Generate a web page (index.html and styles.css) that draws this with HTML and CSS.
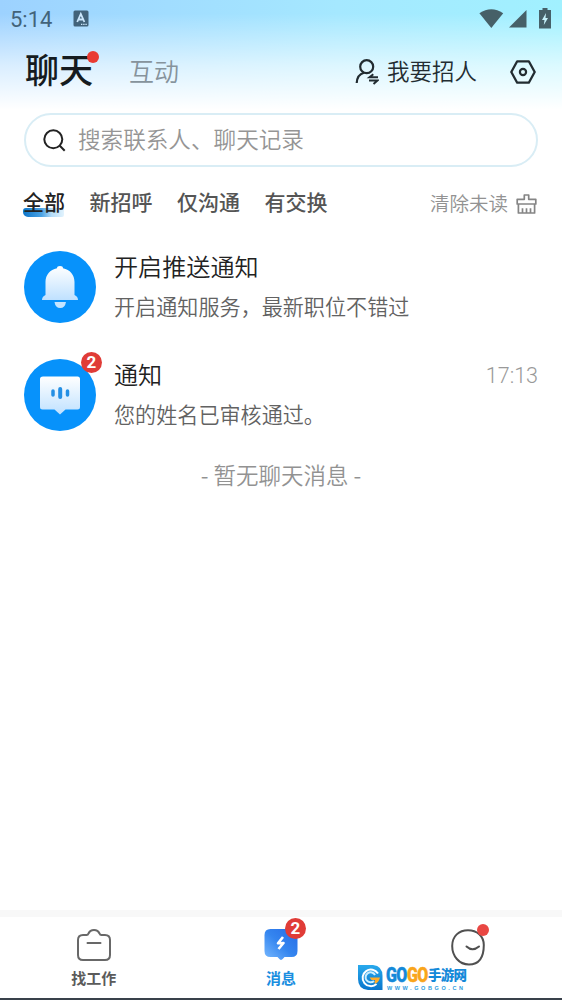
FILE: index.html
```html
<!DOCTYPE html>
<html lang="zh-CN">
<head>
<meta charset="utf-8">
<title>聊天</title>
<link rel="stylesheet" href="styles.css">
</head>
<body>
<div class="app">
  <header class="top">
    <div class="status">
      <span class="clock">5:14</span>
      <svg class="input-icon" width="16" height="17" viewBox="0 0 16 17"><rect x="0.5" y="0.5" width="15" height="16" rx="1.5" fill="#42637a"/><path d="M4.2 12 7.8 4 11.4 12M5.5 9.5H10" fill="none" stroke="#cbe6fb" stroke-width="1.8"/><path d="M8 14.3H14" stroke="#cbe6fb" stroke-width="1.2" stroke-dasharray="1.4 .8"/></svg>
      <div class="system">
        <svg width="25" height="20" viewBox="0 0 25 20"><path d="M.4 4.3Q12.3-3.8 24.2 4.3L12.3 19Z" fill="#466068"/></svg>
        <svg width="18" height="18" viewBox="0 0 18 18"><path d="M17.5 0V17.5H0Z" fill="#466068"/></svg>
        <svg width="12" height="21" viewBox="0 0 12 21"><path d="M3.5 0H8.5V2H12V20.5H0V2H3.5Z" fill="#466068"/><path d="M7 5 3 12H5.500L4.800 17 9 10H6.500Z" fill="#c7f2fb"/></svg>
      </div>
    </div>
    <div class="titlebar">
      <h1 class="title">聊天<i class="title-dot"></i></h1>
      <span class="subtitle">互动</span>
      <div class="hire">
        <svg width="24" height="26" viewBox="0 0 24 26" fill="none" stroke="#222c31" stroke-width="2.200"><circle cx="11.700" cy="7.700" r="6.500"/><path d="M1.700 24C2 18.500 4 15 9 13.700"/><path d="M23 18.200H14.500L18.300 15.200M14 21.500H22.500L18.500 25" stroke-width="2"/></svg>
        <span>我要招人</span>
      </div>
      <svg class="settings" width="26" height="24" viewBox="0 0 26 24" fill="none" stroke="#222c31"><path d="M7.200 1.300H18.800L24.700 12 18.800 22.700H7.200L1.300 12Z" stroke-width="2.300" stroke-linejoin="round"/><circle cx="13" cy="12" r="3.100" stroke-width="2.200"/></svg>
    </div>
  </header>

  <div class="search">
    <svg width="23" height="23" viewBox="0 0 23 23" fill="none" stroke="#222" stroke-width="2"><circle cx="10.300" cy="10.300" r="9"/><path d="m16.800 16.800 4.900 4.900"/></svg>
    <span>搜索联系人、聊天记录</span>
  </div>

  <nav class="filters">
    <span class="filter active">全部</span>
    <span class="filter">新招呼</span>
    <span class="filter">仅沟通</span>
    <span class="filter">有交换</span>
    <div class="clear">
      <span>清除未读</span>
      <svg width="21" height="20" viewBox="0 0 21 20" fill="none" stroke="#858585" stroke-width="1.700" stroke-linejoin="round"><path d="M8.300 5.300V1H12.700V5.300H19.800V10H1.200V5.300ZM2.400 10V19H18.600V10M6.500 19V14.300M10.500 19V14.300M14.500 19V14.300"/></svg>
    </div>
  </nav>

  <main class="messages">
    <article class="message">
      <div class="avatar">
        <svg width="72" height="72" viewBox="0 0 72 72"><defs><linearGradient id="bell" x2="0" y2="1"><stop stop-color="#fff"/><stop offset="1" stop-color="#bfe1ff"/></linearGradient></defs><circle cx="36" cy="36" r="36" fill="#0792fb"/><path d="M33 17.200Q33 15 36 15T39 17.200C46 18.500 50.500 24 50.500 31V44Q54 45.500 54 49H18Q18 45.500 21.500 44V31C21.500 24 26 18.500 33 17.200Z" fill="url(#bell)"/><path d="M30.500 51H42Q41 57 36.200 57T30.500 51Z" fill="#c6e5ff"/></svg>
      </div>
      <div class="content">
        <div class="headline"><h2>开启推送通知</h2></div>
        <p>开启通知服务，最新职位不错过</p>
      </div>
    </article>
    <article class="message">
      <div class="avatar">
        <svg width="72" height="72" viewBox="0 0 72 72"><defs><linearGradient id="bubble" x2="0" y2="1"><stop stop-color="#fff"/><stop offset="1" stop-color="#bfe1ff"/></linearGradient></defs><circle cx="36" cy="36" r="36" fill="#0792fb"/><path d="M19 17.500H53.500Q56 17.500 56 20V48Q56 50.500 53.500 50.500H41.500L36 55.500 30.500 50.500H18.500Q16 50.500 16 48V20Q16 17.500 19 17.500Z" fill="url(#bubble)"/><path d="M29 32V36M43.500 32V36" stroke="#248fe4" stroke-width="3.500" stroke-linecap="round"/><path d="M36.200 30V38" stroke="#248fe4" stroke-width="4" stroke-linecap="round"/></svg>
        <b class="badge">2</b>
      </div>
      <div class="content">
        <div class="headline"><h2>通知</h2><time>17:13</time></div>
        <p>您的姓名已审核通过。</p>
      </div>
    </article>
    <p class="empty">- 暂无聊天消息 -</p>
  </main>

  <footer class="tabbar">
    <div class="tab">
      <div class="tab-icon"><svg width="34" height="34" viewBox="0 0 34 34" fill="none" stroke="#686868" stroke-width="2" stroke-linecap="round" stroke-linejoin="round"><path d="M6 7H9.500Q11 7 11.500 5.500Q13 2 17 2T22.500 5.500Q23 7 24.500 7H28Q33 7 33 12V27Q33 32 28 32H6Q1 32 1 27V12Q1 7 6 7ZM10.500 15H23.500"/></svg></div>
      <span>找工作</span>
    </div>
    <div class="tab current">
      <div class="tab-icon"><svg width="34" height="34" viewBox="0 0 34 34"><defs><linearGradient id="chat" x1="1" y1="0" x2="0" y2="1"><stop stop-color="#266be6"/><stop offset=".5" stop-color="#3485ef"/><stop offset="1" stop-color="#79baff"/></linearGradient></defs><path d="M6.500 1H27.500Q33.500 1 33.500 7V23Q33.500 29 27.500 29H20.500Q18 32 17 32T13.500 29H6.500Q.5 29 .5 23V7Q.5 1 6.500 1Z" fill="url(#chat)"/><path d="M19 9 14 15.300 19.500 15 14.500 21" fill="none" stroke="#fff" stroke-width="2.600" stroke-linejoin="round"/></svg><b class="badge">2</b></div>
      <span>消息</span>
    </div>
    <div class="tab">
      <div class="tab-icon face"><svg width="34" height="37" viewBox="0 0 34 37" fill="none" stroke="#505050" stroke-width="2"><path d="M1.200 17C1.200 7 8 1.200 17 1.200S32.800 7 32.800 16C32.800 29 28 35.500 18 35.500S1.200 27 1.200 17Z"/><path d="M15.500 17.500Q21.500 23 28 17.500" stroke-linecap="round"/></svg><i class="face-dot"></i></div>
    </div>
    <div class="brand">
      <svg width="25" height="25" viewBox="0 0 25 25"><defs><linearGradient id="logo" x2="0" y2="1"><stop stop-color="#29a9ec"/><stop offset="1" stop-color="#0876cd"/></linearGradient></defs><path d="M0 0H15Q24.500 1 24.500 11V25H10Q0 24 0 14Z" fill="url(#logo)"/><path d="M20 8.500A8.300 8.300 0 1 0 18.500 19" fill="none" stroke="#fff" stroke-width="2"/><path d="M17 10A5 5 0 1 0 16 16" fill="none" stroke="#c8edff" stroke-width="2"/><path d="M11.500 12.500H22Q20.500 18.500 16.500 18.500L17 15H13.500Z" fill="#ffac29"/></svg>
      <div class="brand-text">
        <div class="brand-name"><b class="go">GO</b><b class="go orange">GO</b><b class="cn">手游网</b></div>
        <div class="brand-url">WWW.GOBGO.CN</div>
      </div>
    </div>
  </footer>
</div>
</body>
</html>
```

FILE: styles.css
```css
* { box-sizing: border-box; }
body { margin: 0; font-family: "Noto Sans CJK SC", sans-serif; background: #fff; }
h1, h2, p { margin: 0; font-weight: inherit; }
svg { display: block; flex: none; }
.app { width: 562px; height: 1000px; display: flex; flex-direction: column; overflow: hidden; white-space: nowrap; }

.top { height: 113px; background: linear-gradient(180deg, rgba(255,255,255,0) 12%, rgba(255,255,255,.62) 58%, #fff 97%), linear-gradient(90deg, #9dd2ff, #a5e8ff 60%, #a1f1ff); }
.status { height: 40px; padding: 0 11px 3px 10px; display: flex; align-items: center; }
.clock { font: 22px/38px Roboto, sans-serif; color: #42637a; width: 63px; padding-top: 3px; }
.system { margin-left: auto; display: flex; align-items: center; gap: 4px; }
.system svg:first-child { margin-right: 1px; }
.system svg:last-child { margin-left: 8px; }
.titlebar { height: 64px; padding: 0 26px 0 25px; display: flex; align-items: center; }
.title { position: relative; font-size: 34px; line-height: 50px; font-weight: 500; color: #151b20; margin-top: -6px; }
.title-dot { position: absolute; width: 12px; height: 12px; border-radius: 50%; background: #e93b33; top: 7px; right: -6px; }
.subtitle { margin-left: 36px; font-size: 25px; line-height: 40px; font-weight: 350; color: #86939c; margin-top: -5px; }
.hire { margin-left: auto; display: flex; align-items: center; gap: 8px; font-size: 22.5px; line-height: 36px; color: #222c31; font-weight: 350; }
.hire span { margin-top: -5px; }
.settings { margin-left: 33px; }

.search { height: 54px; margin: 0 24px; padding: 0 17px; border: 2px solid #d9edf5; border-radius: 27px; background: #fff; display: flex; align-items: center; gap: 12px; font-size: 22.6px; font-weight: 350; color: #959595; }
.search span { margin-top: -3px; }

.filters { height: 76px; padding: 0 25px 0 23px; display: flex; align-items: center; gap: 24.5px; font-size: 21px; line-height: 30px; font-weight: 500; color: #555; }
.filter { margin-top: -8px; }
.filter.active { position: relative; z-index: 0; color: #222; }
.filter.active::before { content: ""; position: absolute; z-index: -1; left: 0; top: 22px; width: 41px; height: 9px; border-radius: 3px 1px 2px 5px; background: linear-gradient(90deg, #0c74c8, #4ba2e3 45%, #b5dcf8 70%, #e2f3fd); }
.clear { margin-left: auto; display: flex; align-items: center; gap: 8px; font-size: 19.5px; font-weight: 350; color: #929292; }
.clear span { margin-top: -5px; }
.clear svg { margin-top: -2px; }

.messages { flex: 1; }
.message { height: 108px; padding: 8px 24px 0; display: flex; gap: 18px; }
.avatar { position: relative; width: 72px; height: 72px; flex: none; }
.badge { position: absolute; top: -7px; right: -6px; width: 21px; height: 21px; border-radius: 50%; background: #e03c37; color: #fff; font: 700 17px/21px Roboto, sans-serif; text-align: center; }
.content { flex: 1; }
.headline { height: 34px; display: flex; justify-content: space-between; align-items: center; }
.headline h2 { font-size: 24.1px; line-height: 34px; font-weight: 350; color: #222; margin-top: -5px; }
.headline time { font: 300 21.5px/34px Roboto, sans-serif; color: #999; }
.content p { font-size: 21.1px; line-height: 34px; font-weight: 350; color: #626262; margin-top: 4px; }
.empty { text-align: center; font-size: 22.5px; line-height: 34px; margin-top: -2px; font-weight: 350; color: #929292; }

.tabbar { position: relative; height: 90px; border-top: 7px solid #f8f8f8; border-bottom: 2px solid #39414b; display: grid; grid-template-columns: repeat(3, 1fr); }
.tab { display: flex; flex-direction: column; align-items: center; padding-top: 11px; font-size: 15px; line-height: 22px; font-weight: 700; color: #5b5b5b; }
.tab-icon { position: relative; height: 39px; }
.current { color: #198ee0; }
.tab-icon .badge { top: -10px; right: -8px; }
.face { margin-top: 1px; }
.face-dot { position: absolute; right: -4px; top: -5px; width: 12px; height: 12px; border-radius: 50%; background: #e94743; }
.brand { position: absolute; left: 358px; top: 48px; display: flex; gap: 3px; }
.brand-name { display: flex; align-items: center; height: 20px; }
.go { font: 900 21px/20px Roboto, sans-serif; letter-spacing: -.8px; width: 21px; color: #1489d9; -webkit-text-stroke: .5px currentColor; transform: scaleX(.76); transform-origin: left; }
.orange { color: #f9a51b; }
.cn { font-size: 13.5px; line-height: 20px; color: #1489d9; font-weight: 900; letter-spacing: -.7px; margin-top: -2px; }
.brand-url { font: 700 5.5px/7px "Liberation Sans", sans-serif; letter-spacing: 2.6px; color: #2b9be0; margin-left: 1px; }
```
